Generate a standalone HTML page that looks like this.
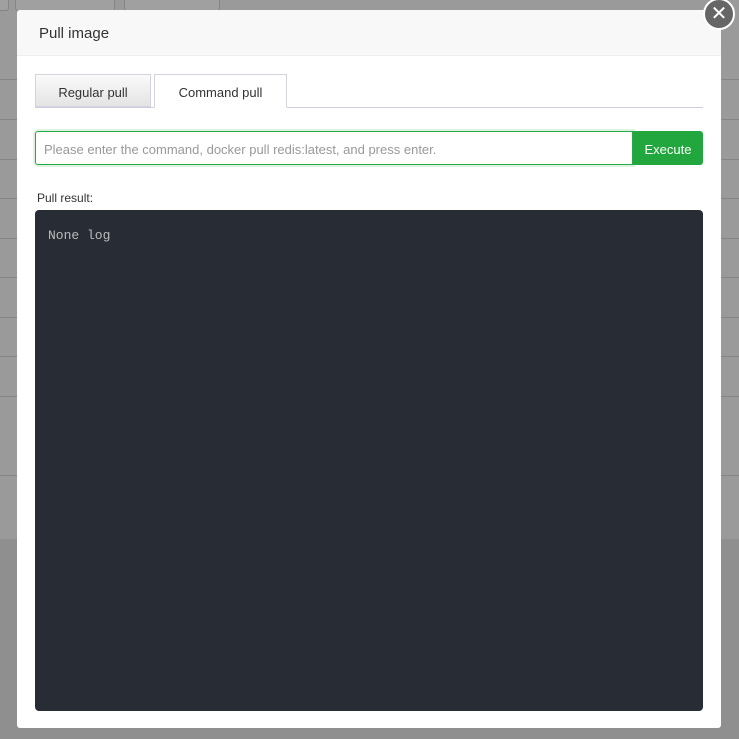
<!DOCTYPE html><html><head><style>
body{margin:0;width:739px;height:739px;background:#8f8f8f;position:relative;overflow:hidden;font-family:"Liberation Sans",sans-serif}
.bg{position:absolute;left:0;top:0;width:739px;height:539px;background:#9a9a9a}
.row{position:absolute;left:0;width:739px;border-top:1px solid #858585}
.m{position:absolute;left:17px;top:10px;width:704px;height:718px;background:#fff;border-radius:3px}
.h{height:45px;background:#f8f8f8;border-bottom:1px solid #eee;font-size:15px;color:#333;line-height:48px;padding-left:22px;border-radius:3px 3px 0 0}
.tabs{position:absolute;left:18px;top:64px;width:668px;height:33px;border-bottom:1px solid #cfcbe0}
.t{position:absolute;top:0;height:33px;line-height:36px;font-size:13px;color:#333;text-align:center;box-sizing:border-box;border:1px solid #d5d3e0}
.in{position:absolute;left:18px;top:121px;width:598px;height:34px;box-sizing:border-box;border:1px solid #27a844;border-radius:3px 0 0 3px;box-shadow:0 0 0 2px #dff3e3;font-size:13px;color:#999;line-height:35px;padding-left:8px}
.btn{position:absolute;left:616px;top:121px;width:70px;height:34px;background:#22a73e;color:#fff;font-size:13px;line-height:37px;text-align:center;border-radius:0 3px 3px 0}
.lbl{position:absolute;left:20px;top:181px;font-size:12px;color:#333}
.log{position:absolute;left:18px;top:200px;width:668px;height:501px;background:#282c34;border-radius:4px;color:#bbb;font-family:"Liberation Mono",monospace;font-size:13px;padding:18px 13px;box-sizing:border-box}
.x{position:absolute;left:703px;top:-2px;width:28px;height:28px;border-radius:50%;background:#666;border:2px solid #fff;color:#fff;text-align:center;line-height:28px;font-size:20px}
.tb{position:absolute;top:-5px;height:14px;border:1px solid #858585;border-radius:3px;background:#a0a0a0}
</style></head><body>
<div class="bg"></div>
<div class="tb" style="left:-3px;width:10px"></div><div class="tb" style="left:15px;width:98px"></div><div class="tb" style="left:124px;width:94px"></div>
<div class="row" style="top:79px"></div><div class="row" style="top:119px"></div><div class="row" style="top:159px"></div><div class="row" style="top:198px"></div><div class="row" style="top:238px"></div><div class="row" style="top:277px"></div><div class="row" style="top:317px"></div><div class="row" style="top:356px"></div><div class="row" style="top:396px"></div><div class="row" style="top:475px"></div>
<div class="m">
<div class="h">Pull image</div>
<div class="tabs">
<div class="t" style="left:0;width:116px;background:linear-gradient(#fafafa,#e4e4e4)">Regular pull</div>
<div class="t" style="left:119px;width:133px;background:#fff;border-bottom:1px solid #fff;height:34px">Command pull</div>
</div>
<div class="in">Please enter the command, docker pull redis:latest, and press enter.</div>
<div class="btn">Execute</div>
<div class="lbl">Pull result:</div>
<div class="log">None log</div>
</div>
<div class="x">✕</div>
</body></html>
